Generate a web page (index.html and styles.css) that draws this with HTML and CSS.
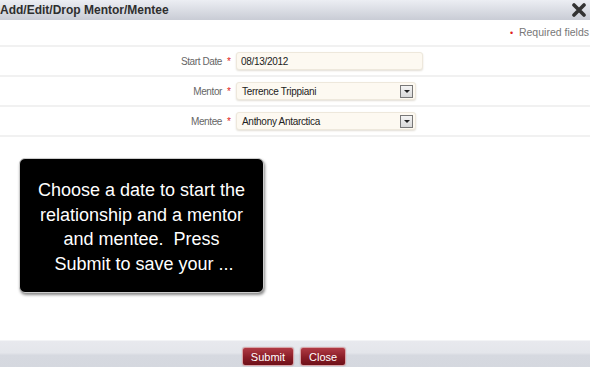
FILE: index.html
```html
<!DOCTYPE html>
<html lang="en">
<head>
    <meta charset="UTF-8">
    <title>Add/Edit/Drop Mentor/Mentee</title>
    <link rel="stylesheet" href="styles.css">
</head>
<body>
    <div class="dialog">
        <div class="titlebar">
            <span class="title">Add/Edit/Drop Mentor/Mentee</span>
            <svg class="close" width="14" height="14" viewBox="0 0 14 14">
                <path d="M2 2 L12 12 M12 2 L2 12" stroke="#333" stroke-width="3.6" stroke-linecap="round"/>
            </svg>
        </div>
        <div class="content">
            <div class="required"><span class="dot">&bull;</span> Required fields</div>
            <div class="form">
                <div class="row">
                    <label>Start Date</label>
                    <span class="star">*</span>
                    <div class="field date">08/13/2012</div>
                </div>
                <div class="row">
                    <label>Mentor</label>
                    <span class="star">*</span>
                    <div class="field select">Terrence Trippiani<span class="arrow"></span></div>
                </div>
                <div class="row">
                    <label>Mentee</label>
                    <span class="star">*</span>
                    <div class="field select">Anthony Antarctica<span class="arrow"></span></div>
                </div>
            </div>
            <div class="tip">Choose a date to start the<br>relationship and a mentor<br>and mentee.&nbsp; Press<br>&nbsp;Submit to save your ...</div>
        </div>
        <div class="footer">
            <button class="btn">Submit</button>
            <button class="btn">Close</button>
        </div>
    </div>
</body>
</html>
```

FILE: styles.css
```css
body { margin: 0; font-family: "Liberation Sans", Arial, sans-serif; background: #fff; }
.dialog { width: 590px; height: 367px; display: flex; flex-direction: column; }
.titlebar { height: 20px; flex: none; display: flex; align-items: center; justify-content: space-between; padding: 0 4px 0 0; background: linear-gradient(#eceef3, #c9ccd5); }
.title { font-size: 12px; font-weight: bold; color: #2e2e2e; }
.close { display: block; }
.content { flex: 1; position: relative; }
.required { text-align: right; font-size: 10.5px; color: #777; padding: 6px 1px 0 0; height: 17px; box-sizing: border-box; }
.dot { color: #e02020; font-size: 9px; margin-right: 3px; }
.star { color: #e02020; font-size: 10px; }
.form { margin-top: 8px; border-top: 2px solid #f1f1f1; }
.row { display: flex; align-items: center; height: 28px; border-bottom: 2px solid #f1f1f1; }
.row label { width: 222px; text-align: right; font-size: 10px; letter-spacing: -0.4px; color: #666; }
.row .star { width: 14px; text-align: center; }
.field { height: 18px; line-height: 17px; box-sizing: border-box; padding: 0 4px; font-size: 10px; letter-spacing: -0.3px; color: #222; background: #fdf9f1; border: 1px solid #eee8dc; border-radius: 3px; box-shadow: 0 1px 2px #e2ded6; position: relative; }
.date { width: 187px; }
.select { width: 180px; padding-left: 5px; }
.arrow { position: absolute; right: 2px; top: 2px; width: 11px; height: 11px; border: 1px solid #777; background: linear-gradient(#f4f4f4, #d8d8d8); }
.arrow::after { content: ""; position: absolute; left: 3px; top: 4px; border-left: 3px solid transparent; border-right: 3px solid transparent; border-top: 3px solid #222; }
.tip { position: absolute; left: 19px; top: 138px; width: 245px; height: 135px; box-sizing: border-box; background: #000; border: 1px solid #ccc; border-radius: 6px; box-shadow: 1px 2px 3px #888; color: #fff; font-size: 18px; line-height: 24.5px; text-align: center; padding: 19px 4px 0; }
.footer { height: 27px; flex: none; border-top: 1px solid #f3f4f6; background: linear-gradient(#e8e9ee, #e4e6eb 45%, #d6d9e0 55%, #d5d8df); display: flex; justify-content: center; align-items: flex-end; gap: 6px; padding-bottom: 1px; padding-right: 2px; box-sizing: border-box; }
.btn { font-family: "Liberation Sans", Arial, sans-serif; font-size: 11px; color: #fff; height: 19px; padding: 0 8px; border: 1px solid #d9a4a8; border-radius: 3px; background: linear-gradient(#b03a44, #8a1d27 55%, #6e1019); box-shadow: 0 0 1px #888; cursor: pointer; }
```
